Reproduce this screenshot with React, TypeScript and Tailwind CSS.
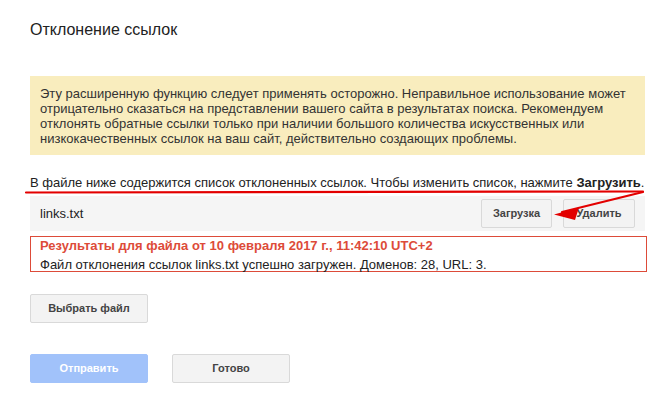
export default function App() {
  const btn =
    "h-[29px] rounded-[2px] border border-[#d9d9d9] bg-[#f3f3f3] text-[11px] font-bold text-[#444] leading-none";

  return (
    <div className="relative w-[663px] h-[396px] bg-white font-['Liberation_Sans',Arial,sans-serif] text-[13px] text-[#222] overflow-hidden">
      <div className="pl-[30px] w-[647px]">
        <h1 className="pt-[19px] text-[16px] leading-[22px] font-normal text-[#222]">
          Отклонение ссылок
        </h1>

        <div className="mt-[35px] w-[615px] bg-[#f9edbe] px-[10px] pt-[10px] pb-[9px] leading-[15px] text-[#333]">
          <div>Эту расширенную функцию следует применять осторожно. Неправильное использование может</div>
          <div>отрицательно сказаться на представлении вашего сайта в результатах поиска. Рекомендуем</div>
          <div>отклонять обратные ссылки только при наличии большого количества искусственных или</div>
          <div>низкокачественных ссылок на ваш сайт, действительно создающих проблемы.</div>
        </div>

        <p className="mt-[20px] leading-[15px] text-[#222] whitespace-nowrap">
          В файле ниже содержится список отклоненных ссылок. Чтобы изменить список, нажмите{" "}
          <b>Загрузить</b>.
        </p>

        <div className="mt-[6px] w-[615px] h-[35px] bg-[#f5f5f5] flex items-center pl-[10px] pr-[10px]">
          <span className="flex-1">links.txt</span>
          <button className={`${btn} w-[71px]`}>Загрузка</button>
          <button className={`${btn} w-[72px] ml-[11px]`}>Удалить</button>
        </div>

        <div className="mt-[5px] w-[617px] border border-[#dd4b39] px-[9px]">
          <div className="leading-[18px] font-bold text-[#dd4b39]">
            Результаты для файла от 10 февраля 2017 г., 11:42:10 UTC+2
          </div>
          <div className="h-[16px] leading-[20px] text-[#222]">
            Файл отклонения ссылок links.txt успешно загружен. Доменов: 28, URL: 3.
          </div>
        </div>

        <button className={`${btn} w-[118px] mt-[22px] block`}>Выбрать файл</button>

        <div className="mt-[31px] flex gap-[24px]">
          <button className="h-[29px] w-[118px] rounded-[2px] border border-[#a1c2fa] bg-[#a1c2fa] text-[11px] font-bold text-white leading-none">
            Отправить
          </button>
          <button className={`${btn} w-[118px]`}>Готово</button>
        </div>
      </div>

      <svg className="absolute left-0 top-0 pointer-events-none" width="663" height="396">
        <line x1="26" y1="192.5" x2="643" y2="191.5" stroke="#e30000" strokeWidth="2.2" strokeLinecap="round" />
        <line x1="643" y1="192" x2="562" y2="212" stroke="#e30000" strokeWidth="2.2" strokeLinecap="round" />
        <polygon points="554,214.5 579,207.5 575,220" fill="#e30000" />
      </svg>
    </div>
  );
}
